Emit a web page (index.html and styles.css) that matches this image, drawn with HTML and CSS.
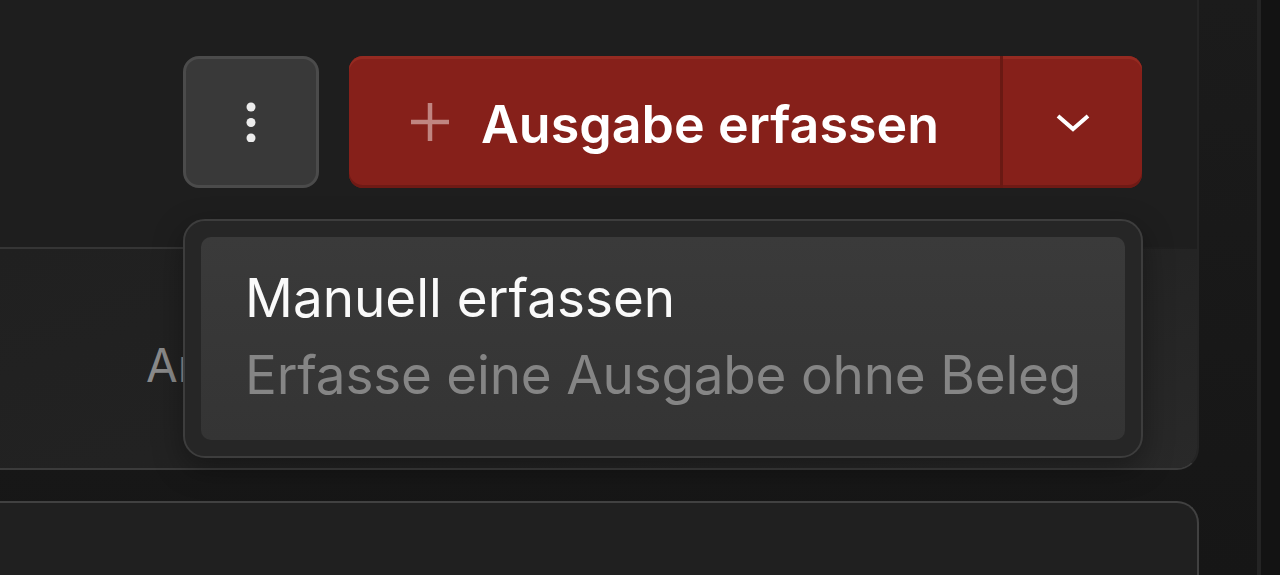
FILE: index.html
```html
<!DOCTYPE html>
<html lang="de">
  <head>
    <meta charset="UTF-8" />
    <meta name="viewport" content="width=device-width, initial-scale=1.0" />
    <title>Ausgaben</title>
    <link rel="stylesheet" href="styles.css">
  </head>
  <body>
    <div class="layout">
      <main class="content">
        <section class="panel">
          <div class="panel-head">
            <div class="actions">
              <button class="icon-btn" aria-label="Mehr">
                <svg width="16" height="40" viewBox="0 0 16 40">
                  <circle cx="8" cy="5" r="4.5" fill="#ececec" />
                  <circle cx="8" cy="20.5" r="4.5" fill="#ececec" />
                  <circle cx="8" cy="36" r="4.5" fill="#ececec" />
                </svg>
              </button>

              <div class="split-btn">
                <button class="split-main">
                  <svg class="plus" width="42" height="42" viewBox="0 0 42 42">
                    <path d="M21 2v38M2 21h38" stroke="currentColor" stroke-width="4.5" />
                  </svg>
                  Ausgabe erfassen
                </button>
                <button class="split-toggle" aria-label="Optionen">
                  <svg width="36" height="22" viewBox="0 0 36 22">
                    <path d="M3 5l15 13 15-13" fill="none" stroke="currentColor" stroke-width="4" />
                  </svg>
                </button>
              </div>

              <div class="menu">
                <div class="menu-item">
                  <div class="menu-title">Manuell erfassen</div>
                  <div class="menu-desc">Erfasse eine Ausgabe ohne Beleg</div>
                </div>
              </div>
            </div>
          </div>

          <div class="panel-body">
            <span class="muted">Anzahl</span>
          </div>
        </section>

        <section class="panel panel-next"></section>
      </main>

      <aside class="gutter"></aside>
    </div>
  </body>
</html>
```

FILE: styles.css
```css
* {
  margin: 0;
  padding: 0;
  box-sizing: border-box;
}

html,
body {
  height: 100%;
  overflow: hidden;
}

body {
  font-family: Inter, "Noto Sans", sans-serif;
  color: #fff;
  background: #141414;
}

.layout {
  display: flex;
  height: 575px;
}

.content {
  flex: 0 0 1257px;
  padding-right: 58px;
  background: linear-gradient(180deg, #1b1b1b 0%, #161616 100%);
}

.gutter {
  flex: 1;
  border-left: 4px solid #242424;
  background: #131313;
}

/* cards */
.panel {
  background: #1e1e1e;
  border-right: 2px solid #252525;
  border-bottom: 2px solid #3b3b3b;
  border-radius: 0 0 22px 0;
}

.panel-head {
  height: 249px;
  border-bottom: 2px solid;
  border-image: linear-gradient(90deg, #353535 0%, #353535 60%, rgba(53, 53, 53, 0) 100%) 1;
}

.panel-body {
  height: 219px;
  padding: 88px 0 0 146px;
  background: linear-gradient(160deg, #202020 0%, #232323 60%, #292929 100%);
  border-radius: 0 0 20px 0;
}

.muted {
  font-size: 46px;
  color: #8a8a8a;
}

.panel-next {
  margin-top: 31px;
  height: 74px;
  background: #202020;
  border-top: 2px solid #414141;
  border-right: 2px solid #414141;
  border-bottom: none;
  border-radius: 0 22px 0 0;
}

/* toolbar */
.actions {
  position: relative;
  display: flex;
  justify-content: flex-end;
  gap: 30px;
  padding: 56px 55px 0 0;
}

.icon-btn {
  width: 136px;
  height: 132px;
  display: flex;
  align-items: center;
  justify-content: center;
  background: #393939;
  border: 3px solid #4b4b4b;
  border-radius: 16px;
  cursor: pointer;
}

.split-btn {
  display: flex;
  height: 132px;
  background: #86201a;
  border-radius: 14px;
  box-shadow: inset 0 3px 0 #952a21, inset 0 -3px 0 #6f1a15;
  overflow: hidden;
}

.split-btn button {
  background: none;
  border: none;
  color: #fff;
  font-family: inherit;
  cursor: pointer;
}

.split-main {
  display: flex;
  align-items: center;
  gap: 30px;
  width: 654px;
  padding: 4px 0 0 60px;
  font-size: 52px;
  font-weight: 600;
  border-right: 3px solid #6a1913 !important;
}

.plus {
  color: #c08581;
  margin-top: -4px;
}

.split-toggle {
  width: 139px;
  display: flex;
  align-items: center;
  justify-content: center;
  color: #c07f7a;
}

/* dropdown menu */
.menu {
  position: absolute;
  top: 219px;
  left: 183px;
  width: 960px;
  height: 239px;
  padding: 16px;
  background: #262626;
  border: 2px solid #3d3d3d;
  border-radius: 22px;
  box-shadow: 0 10px 30px rgba(0, 0, 0, 0.35);
}

.menu-item {
  height: 203px;
  padding: 23px 20px 23px 44px;
  background: linear-gradient(180deg, #3a3a3a 0%, #343434 100%);
  border-radius: 10px;
  line-height: 77px;
  font-size: 53px;
  white-space: nowrap;
}

.menu-title {
  color: #fafafa;
}

.menu-desc {
  color: #858585;
  letter-spacing: -0.2px;
}
```
